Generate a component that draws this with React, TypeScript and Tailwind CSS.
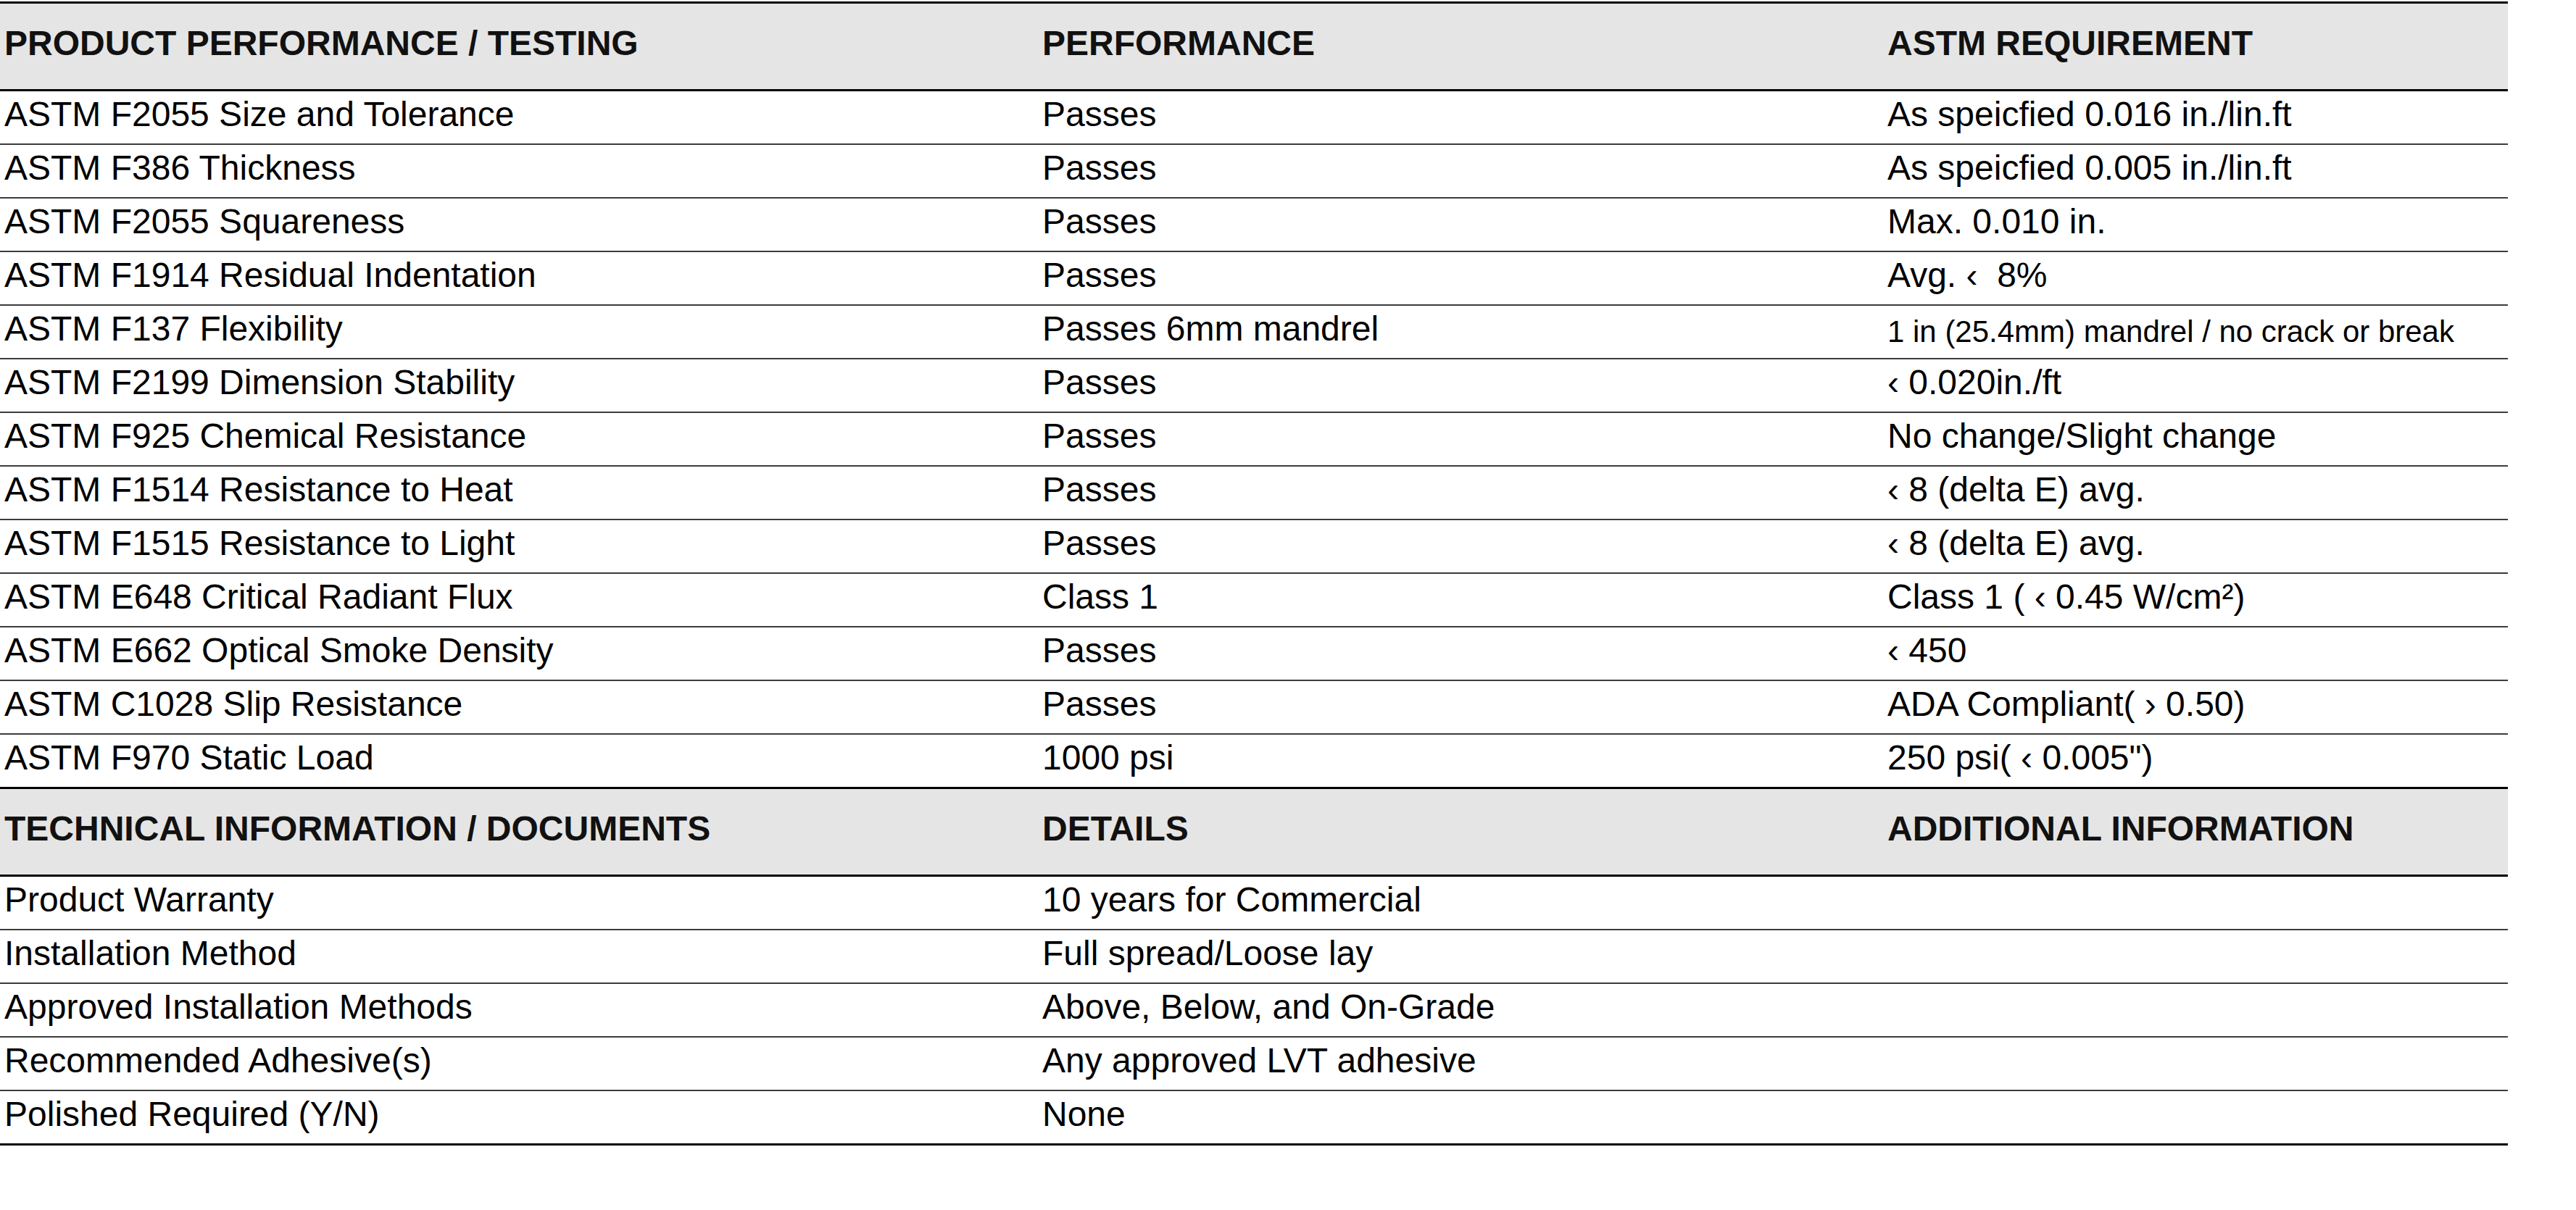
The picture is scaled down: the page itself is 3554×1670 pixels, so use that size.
import React from 'react';

type Row = [string, string, string];

const testing: Row[] = [
  ['ASTM F2055 Size and Tolerance', 'Passes', 'As speicfied 0.016 in./lin.ft'],
  ['ASTM F386 Thickness', 'Passes', 'As speicfied 0.005 in./lin.ft'],
  ['ASTM F2055 Squareness', 'Passes', 'Max. 0.010 in.'],
  ['ASTM F1914 Residual Indentation', 'Passes', 'Avg. \u2039  8%'],
  ['ASTM F137 Flexibility', 'Passes 6mm mandrel', '1 in (25.4mm) mandrel / no crack or break'],
  ['ASTM F2199 Dimension Stability', 'Passes', '\u2039 0.020in./ft'],
  ['ASTM F925 Chemical Resistance', 'Passes', 'No change/Slight change'],
  ['ASTM F1514 Resistance to Heat', 'Passes', '\u2039 8 (delta E) avg.'],
  ['ASTM F1515 Resistance to Light', 'Passes', '\u2039 8 (delta E) avg.'],
  ['ASTM E648 Critical Radiant Flux', 'Class 1', 'Class 1 ( \u2039 0.45 W/cm\u00b2)'],
  ['ASTM E662 Optical Smoke Density', 'Passes', '\u2039 450'],
  ['ASTM C1028 Slip Resistance', 'Passes', 'ADA Compliant( \u203a 0.50)'],
  ['ASTM F970 Static Load', '1000 psi', '250 psi( \u2039 0.005")'],
];

const documents: Row[] = [
  ['Product Warranty', '10 years for Commercial', ''],
  ['Installation Method', 'Full spread/Loose lay', ''],
  ['Approved Installation Methods', 'Above, Below, and On-Grade', ''],
  ['Recommended Adhesive(s)', 'Any approved LVT adhesive', ''],
  ['Polished Required (Y/N)', 'None', ''],
];

const cols = 'grid grid-cols-[1432px_1166px_862px]';

const HeaderRow = ({ cells }: { cells: Row }) => (
  <div className={`${cols} h-[121px] bg-[#e5e5e5] border-b-[3px] border-black`}>
    {cells.map((c, i) => (
      <div key={i} className="pl-[6px] pt-[31px] text-[48px] leading-[48px] font-bold text-[#111]">
        {c}
      </div>
    ))}
  </div>
);

const Section = ({ head, rows }: { head: Row; rows: Row[] }) => (
  <>
    <HeaderRow cells={head} />
    {rows.map((r, idx) => {
      const last = idx === rows.length - 1;
      return (
        <div
          key={idx}
          className={`${cols} ${last ? 'h-[75px] border-b-[3px] border-black' : 'h-[74px] border-b-2 border-[#3c3c3c]'}`}
        >
          {r.map((c, i) => {
            // this one cell is set smaller in the source sheet
            const small = c.startsWith('1 in (');
            return (
              <div
                key={i}
                className={`pl-[6px] whitespace-pre text-black ${
                  small ? 'pt-[12px] text-[42px] leading-[48px]' : 'pt-[8px] text-[48px] leading-[48px]'
                }`}
              >
                {c}
              </div>
            );
          })}
        </div>
      );
    })}
  </>
);

export default function App() {
  return (
    <div
      className="w-[3554px] h-[1670px] bg-white pt-[2px]"
      style={{ fontFamily: '"Liberation Sans", Arial, sans-serif' }}
    >
      <div className="w-[3460px] border-t-[3px] border-black">
        <Section head={['PRODUCT PERFORMANCE / TESTING', 'PERFORMANCE', 'ASTM REQUIREMENT']} rows={testing} />
        <Section head={['TECHNICAL INFORMATION / DOCUMENTS', 'DETAILS', 'ADDITIONAL INFORMATION']} rows={documents} />
      </div>
    </div>
  );
}
